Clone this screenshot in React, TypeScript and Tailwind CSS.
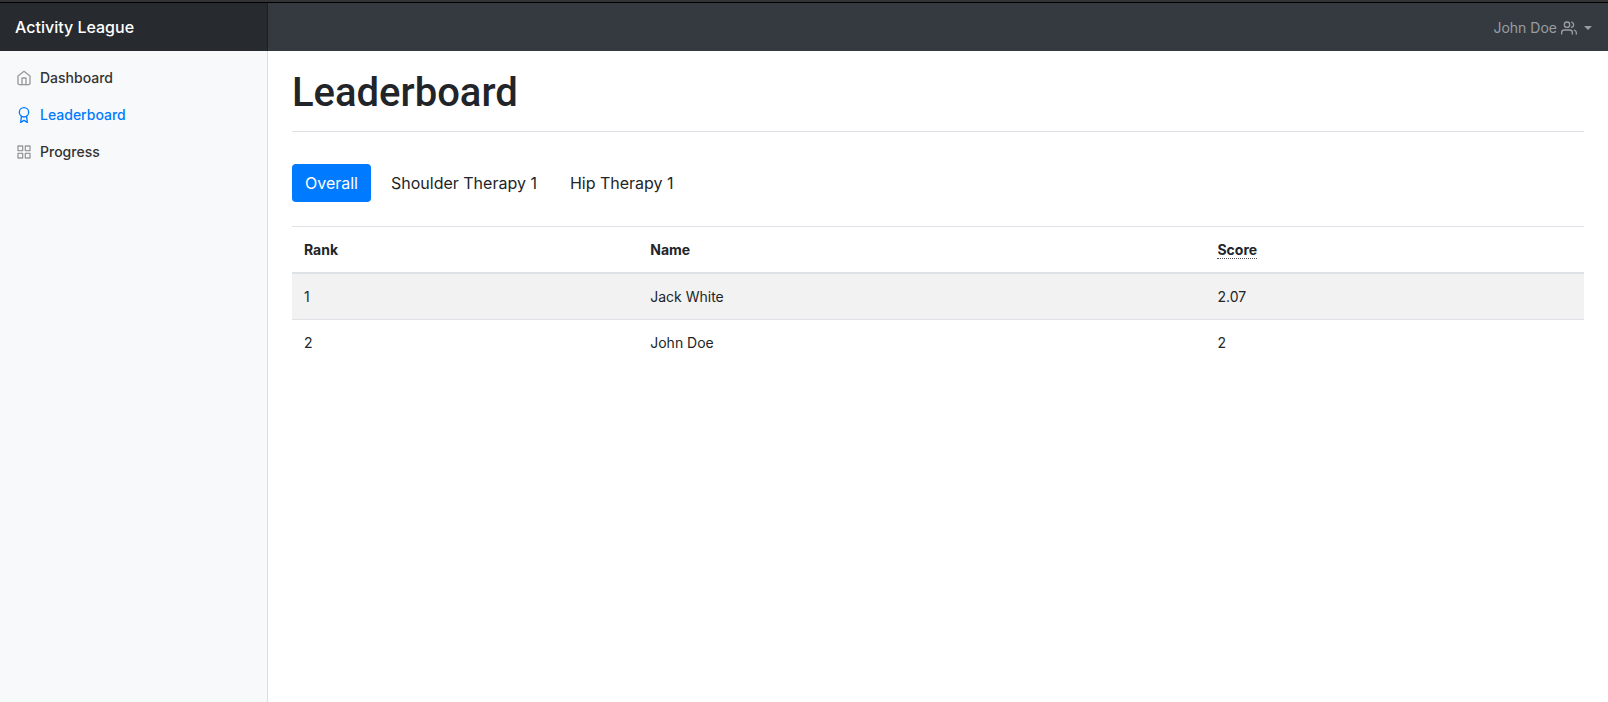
import React from "react";

const iconProps = {
  viewBox: "0 0 24 24",
  fill: "none",
  stroke: "currentColor",
  strokeWidth: 2,
  strokeLinecap: "round" as const,
  strokeLinejoin: "round" as const,
  "aria-hidden": true,
};

const HomeIcon = () => (
  <svg {...iconProps} className="size-4 shrink-0">
    <path d="M3 9l9-7 9 7v11a2 2 0 0 1-2 2H5a2 2 0 0 1-2-2z" />
    <polyline points="9 22 9 12 15 12 15 22" />
  </svg>
);

const AwardIcon = () => (
  <svg {...iconProps} className="size-4 shrink-0">
    <circle cx="12" cy="8" r="7" />
    <polyline points="8.21 13.89 7 23 12 20 17 23 15.79 13.88" />
  </svg>
);

const GridIcon = () => (
  <svg {...iconProps} className="size-4 shrink-0">
    <rect x="3" y="3" width="7" height="7" />
    <rect x="14" y="3" width="7" height="7" />
    <rect x="14" y="14" width="7" height="7" />
    <rect x="3" y="14" width="7" height="7" />
  </svg>
);

const UsersIcon = () => (
  <svg {...iconProps} className="size-4 shrink-0">
    <path d="M17 21v-2a4 4 0 0 0-4-4H5a4 4 0 0 0-4 4v2" />
    <circle cx="9" cy="7" r="4" />
    <path d="M23 21v-2a4 4 0 0 0-3-3.87" />
    <path d="M16 3.13a4 4 0 0 1 0 7.75" />
  </svg>
);

const navItems = [
  { label: "Dashboard", Icon: HomeIcon, active: false },
  { label: "Leaderboard", Icon: AwardIcon, active: true },
  { label: "Progress", Icon: GridIcon, active: false },
];

const tabs = ["Overall", "Shoulder Therapy 1", "Hip Therapy 1"];

const rows = [
  { rank: 1, name: "Jack White", score: "2.07" },
  { rank: 2, name: "John Doe", score: "2" },
];

export default function App() {
  const [tab, setTab] = React.useState("Overall");

  return (
    <div className="flex min-h-screen flex-col bg-white font-['Inter',sans-serif] text-[#212529]">
      <header className="flex h-[51px] items-stretch border-t-2 border-[#333336] bg-[#343a40]">
        <div className="flex w-full border-t border-black">
          <a
            href="#"
            className="flex w-1/6 items-center border-r border-[#1d2023] bg-[#272b30] px-[15px] text-base font-medium text-white"
          >
            Activity League
          </a>
          <div className="flex flex-1 items-center justify-end px-4 pt-0.5">
            <button className="flex items-center gap-1 text-sm text-[#9a9da0]">
              John Doe
              <UsersIcon />
              <span className="ml-[3px] border-x-4 border-t-4 border-x-transparent border-t-current" />
            </button>
          </div>
        </div>
      </header>

      <div className="flex flex-1">
        <nav className="w-1/6 border-r border-[#dcdddf] bg-[#f8f9fa] pt-2">
          <ul>
            {navItems.map(({ label, Icon, active }) => (
              <li key={label}>
                <a
                  href="#"
                  className={`flex items-center gap-2 px-4 py-2 text-sm leading-[21px] font-medium ${
                    active ? "text-[#007bff]" : "text-[#333333]"
                  }`}
                >
                  <span className={active ? "text-[#007bff]" : "text-[#999999]"}>
                    <Icon />
                  </span>
                  {label}
                </a>
              </li>
            ))}
          </ul>
        </nav>

        <main className="flex-1 px-6 pt-[18px]">
          <h1 className="border-b border-[#dee2e6] pb-[14px] font-['Roboto',sans-serif] text-[40px] leading-[48px] font-medium">
            Leaderboard
          </h1>

          <div className="mt-8 flex gap-[7px]" role="tablist">
            {tabs.map((name) => (
              <button
                key={name}
                role="tab"
                aria-selected={tab === name}
                onClick={() => setTab(name)}
                className={`rounded px-[13px] py-[7px] text-base ${
                  tab === name ? "bg-[#007bff] text-white" : "text-[#212529]"
                }`}
              >
                {name}
              </button>
            ))}
          </div>

          <table className="mt-6 w-full table-fixed border-collapse text-left text-sm leading-[21px]">
            <colgroup>
              <col className="w-[26.8%]" />
              <col className="w-[43.9%]" />
              <col />
            </colgroup>
            <thead>
              <tr className="border-t border-b-2 border-[#dee2e6]">
                <th className="p-3 font-bold">Rank</th>
                <th className="p-3 font-bold">Name</th>
                <th className="p-3 font-bold">
                  <abbr className="cursor-help border-b border-dotted border-[#50545a] no-underline">
                    Score
                  </abbr>
                </th>
              </tr>
            </thead>
            <tbody>
              {rows.map((row) => (
                <tr
                  key={row.rank}
                  className="border-t border-[#dee2e6] odd:bg-[#f2f2f2]"
                >
                  <td className="p-3">{row.rank}</td>
                  <td className="p-3">{row.name}</td>
                  <td className="p-3">{row.score}</td>
                </tr>
              ))}
            </tbody>
          </table>
        </main>
      </div>
    </div>
  );
}
